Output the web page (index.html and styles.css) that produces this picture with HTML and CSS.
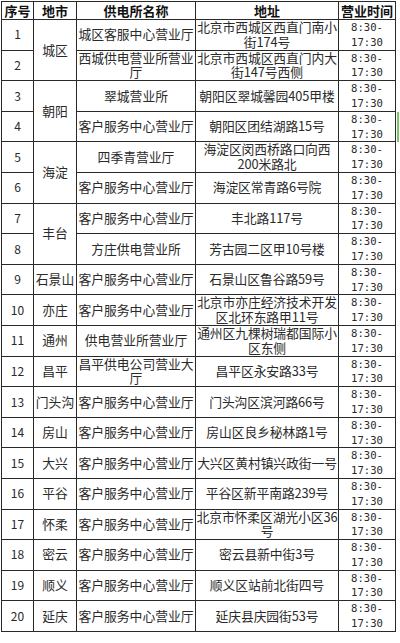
FILE: index.html
```html
<!DOCTYPE html>
<html lang="zh-CN">
<head>
<meta charset="utf-8">
<title>供电营业厅</title>
<link rel="stylesheet" href="styles.css">
</head>
<body>
<div class="page">
<table class="grid">
  <colgroup>
    <col class="c-no"><col class="c-city"><col class="c-name"><col class="c-addr"><col class="c-time">
  </colgroup>
  <thead>
    <tr><th>序号</th><th>地市</th><th>供电所名称</th><th>地址</th><th>营业时间</th></tr>
  </thead>
  <tbody>
    <tr><td class="no">1</td><td rowspan="2">城区</td><td>城区客服中心营业厅</td><td class="addr">北京市西城区西直门南小街174号</td><td class="time">8:30-17:30</td></tr>
    <tr><td class="no">2</td><td>西城供电营业所营业厅</td><td class="addr">北京市西城区西直门内大街147号西侧</td><td class="time">8:30-17:30</td></tr>
    <tr><td class="no">3</td><td rowspan="2">朝阳</td><td>翠城营业所</td><td class="addr">朝阳区翠城馨园405甲楼</td><td class="time">8:30-17:30</td></tr>
    <tr><td class="no">4</td><td>客户服务中心营业厅</td><td class="addr">朝阳区团结湖路15号</td><td class="time">8:30-17:30</td></tr>
    <tr><td class="no">5</td><td rowspan="2">海淀</td><td>四季青营业厅</td><td class="addr">海淀区闵西桥路口向西200米路北</td><td class="time">8:30-17:30</td></tr>
    <tr><td class="no">6</td><td>客户服务中心营业厅</td><td class="addr">海淀区常青路6号院</td><td class="time">8:30-17:30</td></tr>
    <tr><td class="no">7</td><td rowspan="2">丰台</td><td>客户服务中心营业厅</td><td class="addr">丰北路117号</td><td class="time">8:30-17:30</td></tr>
    <tr><td class="no">8</td><td>方庄供电营业所</td><td class="addr">芳古园二区甲10号楼</td><td class="time">8:30-17:30</td></tr>
    <tr><td class="no">9</td><td>石景山</td><td>客户服务中心营业厅</td><td class="addr">石景山区鲁谷路59号</td><td class="time">8:30-17:30</td></tr>
    <tr><td class="no">10</td><td>亦庄</td><td>客户服务中心营业厅</td><td class="addr">北京市亦庄经济技术开发区北环东路甲11号</td><td class="time">8:30-17:30</td></tr>
    <tr><td class="no">11</td><td>通州</td><td>供电营业所营业厅</td><td class="addr">通州区九棵树瑞都国际小区东侧</td><td class="time">8:30-17:30</td></tr>
    <tr><td class="no">12</td><td>昌平</td><td>昌平供电公司营业大厅</td><td class="addr">昌平区永安路33号</td><td class="time">8:30-17:30</td></tr>
    <tr><td class="no">13</td><td>门头沟</td><td>客户服务中心营业厅</td><td class="addr">门头沟区滨河路66号</td><td class="time">8:30-17:30</td></tr>
    <tr><td class="no">14</td><td>房山</td><td>客户服务中心营业厅</td><td class="addr">房山区良乡秘林路1号</td><td class="time">8:30-17:30</td></tr>
    <tr><td class="no">15</td><td>大兴</td><td>客户服务中心营业厅</td><td class="addr">大兴区黄村镇兴政街一号</td><td class="time">8:30-17:30</td></tr>
    <tr><td class="no">16</td><td>平谷</td><td>客户服务中心营业厅</td><td class="addr">平谷区新平南路239号</td><td class="time">8:30-17:30</td></tr>
    <tr><td class="no">17</td><td>怀柔</td><td>客户服务中心营业厅</td><td class="addr">北京市怀柔区湖光小区36号</td><td class="time">8:30-17:30</td></tr>
    <tr><td class="no">18</td><td>密云</td><td>客户服务中心营业厅</td><td class="addr">密云县新中街3号</td><td class="time">8:30-17:30</td></tr>
    <tr><td class="no">19</td><td>顺义</td><td>客户服务中心营业厅</td><td class="addr">顺义区站前北街四号</td><td class="time">8:30-17:30</td></tr>
    <tr><td class="no">20</td><td>延庆</td><td>客户服务中心营业厅</td><td class="addr">延庆县庆园街53号</td><td class="time">8:30-17:30</td></tr>
  </tbody>
</table>
<div class="sel-mark"></div>
</div>
</body>
</html>
```

FILE: styles.css
```css
html, body {
  margin: 0;
  padding: 0;
  background: #fff;
}

.page {
  position: relative;
  padding: 1px 0 0 1px;
}

.grid {
  border-collapse: collapse;
  table-layout: fixed;
  width: 394px;
  font-family: "Noto Sans CJK SC", "Noto Sans", sans-serif;
  font-size: 12.8px;
  color: #2a2a2a;
  border-bottom: 1px dotted #bbb;
}

.c-no { width: 32px; }
.c-city { width: 43px; }
.c-name { width: 119px; }
.c-addr { width: 143px; }
.c-time { width: 57px; }

.grid th,
.grid td {
  border: 1px solid #2a2a2a;
  padding: 0;
  text-align: center;
  vertical-align: middle;
}

.grid th {
  height: 17px;
  font-size: 13px;
  font-weight: 700;
  line-height: 17px;
  color: #111;
}

.grid td {
  height: 29.6px;
  line-height: 14.8px;
}

.grid td.no {
  font-size: 12px;
}

.grid td.addr {
  letter-spacing: -0.1px;
}

.grid td.time {
  font-family: "DejaVu Sans Mono", "Liberation Mono", monospace;
  font-size: 10.6px;
  color: #2a2a2a;
}

.sel-mark {
  position: absolute;
  left: 397px;
  top: 112px;
  width: 2px;
  height: 30px;
  background: #7cc46a;
}
```
